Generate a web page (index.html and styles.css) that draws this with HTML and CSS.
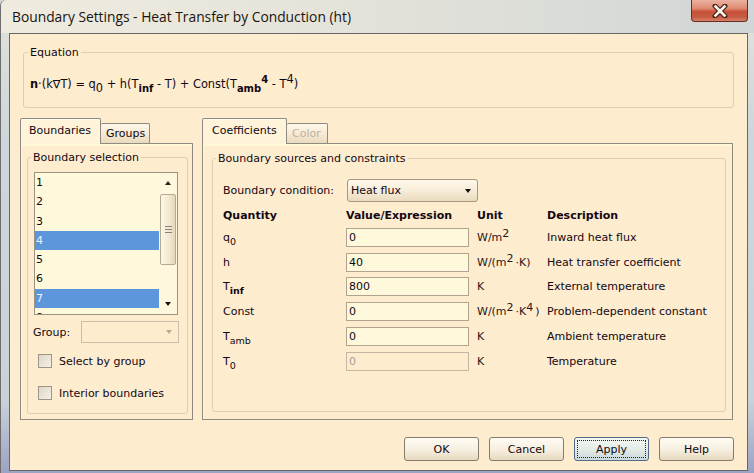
FILE: index.html
```html
<!DOCTYPE html>
<html>
<head>
<meta charset="utf-8">
<title>Boundary Settings</title>
<link rel="stylesheet" href="styles.css">
</head>
<body>
<div class="window">
  <div class="titlebar">
    <span class="title">Boundary Settings - Heat Transfer by Conduction (ht)</span>
    <div class="close">
      <svg width="20" height="14" viewBox="0 0 20 14">
        <path d="M5 2 L15 12 M15 2 L5 12" stroke="#4a2418" stroke-width="5" stroke-linecap="round"/>
        <path d="M5.5 2.5 L14.5 11.5 M14.5 2.5 L5.5 11.5" stroke="#fbf4ec" stroke-width="2.6" stroke-linecap="square"/>
      </svg>
    </div>
  </div>
  <div class="client">
    <fieldset class="group eq">
      <legend>Equation</legend>
      <div class="equation"><b>n</b>·(k∇T) = q<span class="sub">0</span> + h(T<span class="sub es">inf</span> - T) + Const(T<span class="sub es">amb</span><span class="sup es">4</span> - T<span class="sup">4</span>)</div>
    </fieldset>

    <div class="panes">
      <div class="tabctl left">
        <div class="tabs">
          <div class="tab active t-bnd">Boundaries</div>
          <div class="tab t-grp">Groups</div>
        </div>
        <div class="tabpanel lpanel">
          <fieldset class="group bsel">
            <legend>Boundary selection</legend>
            <div class="listbox">
              <ul class="items">
                <li>1</li>
                <li>2</li>
                <li>3</li>
                <li class="sel">4</li>
                <li>5</li>
                <li>6</li>
                <li class="sel">7</li>
                <li>8</li>
              </ul>
              <div class="scrollbar">
                <div class="sbtn"><span class="tri up"></span></div>
                <div class="track"><div class="thumb"><span class="grip"></span></div></div>
                <div class="sbtn"><span class="tri down"></span></div>
              </div>
            </div>
            <div class="grouprow">
              <span class="glabel">Group:</span>
              <div class="combo disabled"><span class="tri down gray"></span></div>
            </div>
            <div class="check c1"><span class="box"></span><span>Select by group</span></div>
            <div class="check c2"><span class="box"></span><span>Interior boundaries</span></div>
          </fieldset>
        </div>
      </div>

      <div class="tabctl right">
        <div class="tabs">
          <div class="tab active t-coef">Coefficients</div>
          <div class="tab disabled t-col">Color</div>
        </div>
        <div class="tabpanel rpanel">
          <fieldset class="group bsrc">
            <legend>Boundary sources and constraints</legend>
            <div class="bcrow">
              <span class="bclabel">Boundary condition:</span>
              <div class="combo sel"><span class="ctext">Heat flux</span><span class="tri down"></span></div>
            </div>
            <div class="table">
              <div class="th">Quantity</div>
              <div class="th">Value/Expression</div>
              <div class="th">Unit</div>
              <div class="th">Description</div>

              <div class="td">q<span class="sub ts">0</span></div>
              <div class="td"><input class="field" type="text" value="0"></div>
              <div class="td unit">W/m<span class="usup">2</span></div>
              <div class="td">Inward heat flux</div>

              <div class="td">h</div>
              <div class="td"><input class="field" type="text" value="40"></div>
              <div class="td unit">W/(m<span class="usup">2</span>·K)</div>
              <div class="td">Heat transfer coefficient</div>

              <div class="td">T<span class="sub ts b">inf</span></div>
              <div class="td"><input class="field" type="text" value="800"></div>
              <div class="td unit">K</div>
              <div class="td">External temperature</div>

              <div class="td">Const</div>
              <div class="td"><input class="field" type="text" value="0"></div>
              <div class="td unit">W/(m<span class="usup">2</span>·K<span class="usup">4</span>)</div>
              <div class="td">Problem-dependent constant</div>

              <div class="td">T<span class="sub ts">amb</span></div>
              <div class="td"><input class="field" type="text" value="0"></div>
              <div class="td unit">K</div>
              <div class="td">Ambient temperature</div>

              <div class="td">T<span class="sub ts">0</span></div>
              <div class="td"><input class="field off" type="text" value="0" disabled></div>
              <div class="td unit">K</div>
              <div class="td">Temperature</div>
            </div>
          </fieldset>
        </div>
      </div>
    </div>

    <div class="buttons">
      <button class="btn">OK</button>
      <button class="btn">Cancel</button>
      <button class="btn focus">Apply</button>
      <button class="btn">Help</button>
    </div>
  </div>
</div>
</body>
</html>
```
FILE: styles.css
```css
* { box-sizing: border-box; }
html, body { margin: 0; padding: 0; }
body {
  width: 754px;
  height: 473px;
  overflow: hidden;
  font-family: "DejaVu Sans", "Liberation Sans", sans-serif;
  font-size: 11px;
  color: #120812;
  background: #cfd6da;
}
.window {
  width: 754px;
  height: 473px;
  display: flex;
  flex-direction: column;
  border-left: 1px solid #6e6e6e;
  border-top-left-radius: 6px;
  background: linear-gradient(to bottom, #e8e5da 0, #dcdfda 40px, #cdd6da 140px, #c9d2d9 400px, #9ba3c4 473px);
}
.titlebar {
  height: 33px;
  flex: none;
  display: flex;
  align-items: flex-start;
  border-top-left-radius: 6px;
  background: linear-gradient(to right, #efebdf 0%, #e6e4da 40%, #d8dbd7 80%, #d0d6d7 100%);
}
.title {
  font-family: "Open Sans", "DejaVu Sans", sans-serif;
  font-size: 13.8px;
  color: #1a1410;
  margin: 7px 0 0 11px;
  line-height: 19px;
}
.close {
  margin-left: auto;
  margin-right: 6px;
  width: 57px;
  height: 22px;
  border: 1px solid #6b2d1e;
  border-top: none;
  border-radius: 0 0 4px 4px;
  background: linear-gradient(to bottom, #eab2a0 0%, #e08a72 40%, #c9523a 55%, #c45a40 80%, #d8806a 100%);
  display: flex;
  align-items: center;
  justify-content: center;
}
.client {
  flex: none;
  height: 438px;
  width: 739px;
  margin-left: 8px;
  border: 1px solid #676767;
  background: #feeccf;
  display: flex;
  flex-direction: column;
}
.group {
  border: 1px solid #dccfb2;
  border-radius: 3px;
  margin: 0;
  min-width: 0;
}
.group legend {
  padding: 0 2px;
  line-height: 13px;
}
.eq {
  margin: 12px 13px 0 13px;
  padding: 0 4px 12px 4px;
  height: 62px;
}
.equation {
  padding: 17px 0 0 2px;
  line-height: 16px;
  font-size: 11.4px;
  white-space: nowrap;
}
.sub { position: relative; top: 4px; line-height: 0; }
.sup { position: relative; top: -5px; line-height: 0; }
.es { font-weight: bold; font-size: 10px; }
.ts { font-size: 9.5px; }
.b { font-weight: bold; }

.panes {
  display: flex;
  height: 302px;
  margin-top: 10px;
  padding-left: 10px;
}
.tabctl { display: flex; flex-direction: column; }
.tabctl.left { width: 173px; }
.tabctl.right { width: 531px; margin-left: 9px; }
.tabs {
  height: 25px;
  flex: none;
  display: flex;
  align-items: flex-end;
}
.tab {
  height: 20px;
  border: 1px solid #8f8b82;
  border-bottom: none;
  border-left: none;
  border-radius: 2px 2px 0 0;
  background: linear-gradient(to bottom, #fff8ea 0%, #f6ead4 50%, #e9dbbd 100%);
  display: flex;
  align-items: center;
  padding-left: 5px;
  line-height: 13px;
}
.tab.active {
  height: 26px;
  margin-bottom: -1px;
  border-left: 1px solid #8f8b82;
  background: #fff3d9;
  position: relative;
  z-index: 1;
  padding-bottom: 2px;
  box-shadow: inset 0 1px 0 #fffbeb;
}
.t-bnd { width: 81px; padding-left: 8px; }
.t-grp { width: 49px; }
.t-coef { width: 85px; padding-left: 9px; }
.t-col { width: 41px; }
.tab.disabled { color: #bdb2a2; }
.tabpanel {
  flex: 1;
  border: 1px solid #8f8b82;
  background: #feeccf;
  box-shadow: inset 1px 1px 0 #fff7da, inset 0 2px 0 #fff7da;
  display: flex;
  flex-direction: column;
}
.lpanel { padding: 7px 4px 5px 6px; }
.rpanel { padding: 8px 6px 7px 9px; }

.bsel {
  flex: 1;
  padding: 0 8px 0 6px;
}
.bsel legend { margin-left: -3px; }
.listbox {
  margin-top: 8px;
  width: 144px;
  height: 143px;
  border: 1px solid #9b9283;
  background: #fff9dc;
  display: flex;
}
.items {
  list-style: none;
  margin: 0;
  padding: 0;
  width: 124px;
  overflow: hidden;
}
.items li {
  height: 19.3px;
  line-height: 19.3px;
  padding-left: 1px;
}
.items li.sel {
  background: #5e96dc;
  color: #eef4ff;
}
.scrollbar {
  width: 18px;
  display: flex;
  flex-direction: column;
  background: #fef6dd;
}
.sbtn {
  height: 20px;
  flex: none;
  display: flex;
  align-items: center;
  justify-content: center;
}
.track { flex: 1; padding: 1px 1px 0 1px; }
.thumb {
  height: 71px;
  border: 1px solid #b7aa93;
  border-radius: 2px;
  background: linear-gradient(to right, #fdf6e6, #f2e7d0 60%, #e4d6ba);
  display: flex;
  align-items: center;
  justify-content: center;
}
.grip {
  width: 7px;
  height: 7px;
  border-top: 1px solid #8c8070;
  border-bottom: 1px solid #8c8070;
  background: linear-gradient(to bottom, transparent 2px, #8c8070 2px, #8c8070 3px, transparent 3px);
}
.tri {
  width: 0;
  height: 0;
  border-left: 3.5px solid transparent;
  border-right: 3.5px solid transparent;
}
.tri.up { border-bottom: 4px solid #2a2420; }
.tri.down { border-top: 4px solid #141010; }
.tri.down.gray { border-top-color: #b4aa9a; }

.grouprow {
  margin-top: 6px;
  height: 22px;
  display: flex;
  align-items: center;
}
.glabel { margin-left: -1px; }
.combo {
  display: flex;
  align-items: center;
}
.combo.disabled {
  margin-left: auto;
  width: 98px;
  height: 22px;
  border: 1px solid #cbbfaa;
  justify-content: flex-end;
  padding-right: 6px;
}
.check {
  display: flex;
  align-items: center;
  height: 20px;
  margin-left: 4px;
}
.c1 { margin-top: 8px; }
.c2 { margin-top: 12px; }
.box {
  width: 14px;
  height: 14px;
  border: 1px solid #9c958a;
  background: linear-gradient(135deg, #ddd5c6, #f6f2ea);
  margin-right: 7px;
}

.bsrc {
  flex: 1;
  padding: 0 6px 0 10px;
}
.bsrc legend { margin-left: -7px; }
.bcrow {
  margin-top: 14px;
  height: 23px;
  display: flex;
  align-items: center;
}
.bclabel { width: 124px; }
.combo.sel {
  width: 131px;
  height: 23px;
  border: 1px solid #a6977f;
  border-radius: 3px;
  background: linear-gradient(to bottom, #fff8ea 0%, #f7ecd8 50%, #eadcbf 100%);
  padding: 0 6px 0 3px;
  justify-content: space-between;
}
.table {
  margin-top: 3px;
  display: grid;
  grid-template-columns: 123px 131px 70px 1fr;
  grid-template-rows: 20px repeat(6, 24.8px);
  align-items: center;
}
.th { font-weight: bold; white-space: nowrap; }
.td { white-space: nowrap; }
.unit { color: #2a1418; }
.usup { position: relative; top: -4px; line-height: 0; margin-right: 2px; }
.field {
  display: block;
  width: 123px;
  height: 19px;
  border: 1px solid #b1a390;
  background: #fff9dc;
  font: inherit;
  color: #120812;
  padding: 0 2px;
  margin: 0;
  outline: none;
}
.field.off {
  background: #feeccf;
  border-color: #c4b7a4;
  color: #a89e92;
}

.buttons {
  margin-top: 17px;
  height: 24px;
  display: flex;
  justify-content: flex-end;
  gap: 10px;
  padding-right: 13px;
}
.btn {
  width: 75px;
  height: 24px;
  border: 1px solid #857c6d;
  border-radius: 3px;
  background: linear-gradient(to bottom, #fffcf4 0%, #f6eedf 55%, #e6d9be 100%);
  font: inherit;
  color: #120812;
  padding: 0;
}
.btn.focus {
  border-color: #52698a;
  background: linear-gradient(to bottom, #f6f8f2 0%, #e2eae4 55%, #cbd9dc 100%);
  outline: 1px dotted #222;
  outline-offset: -4px;
}
```
